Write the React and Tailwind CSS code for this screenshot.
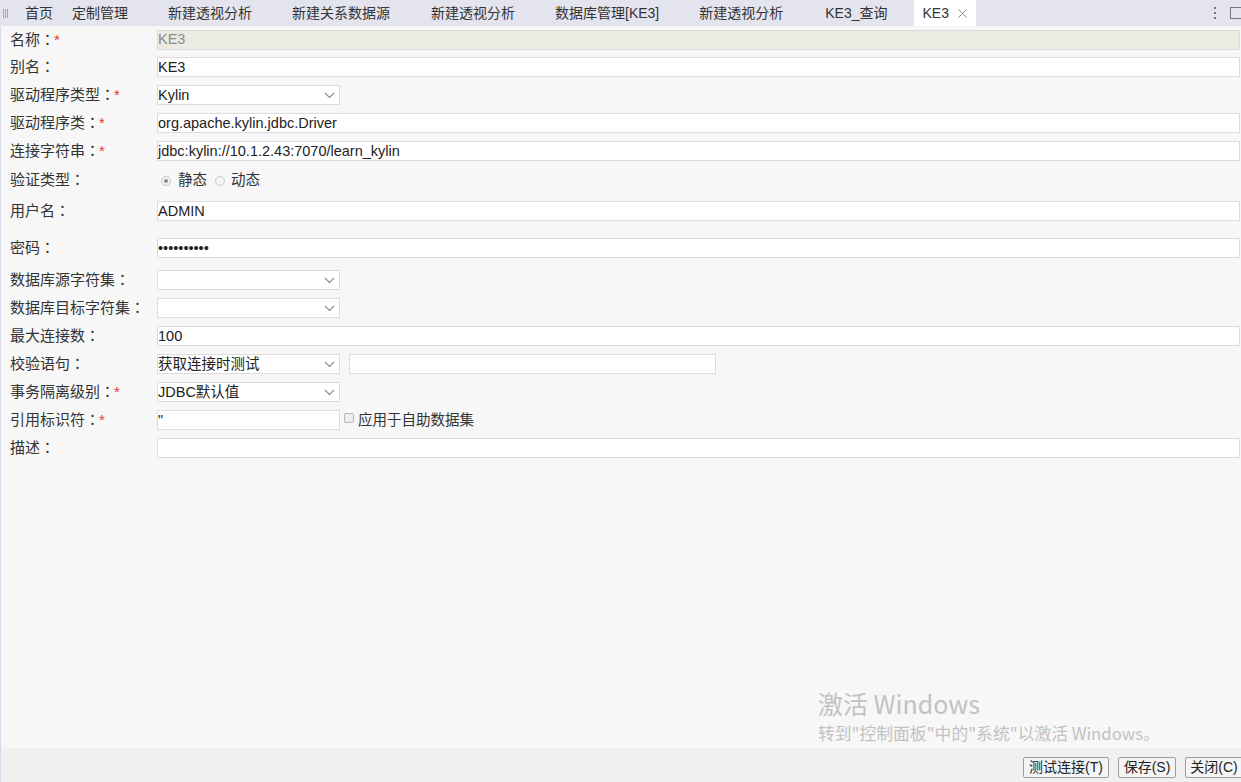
import { X } from "lucide-react";

const tabs = [
  { label: "首页", cls: "ml-[17px]" },
  { label: "定制管理", cls: "ml-[19px]" },
  { label: "新建透视分析", cls: "ml-[40px]" },
  { label: "新建关系数据源", cls: "ml-[40px]" },
  { label: "新建透视分析", cls: "ml-[41px]" },
  { label: "数据库管理[KE3]", cls: "ml-[40px]" },
  { label: "新建透视分析", cls: "ml-[40px]" },
  { label: "KE3_查询", cls: "ml-[42px]" },
];

const font = { fontFamily: '"Liberation Sans", Arial, "Noto Sans CJK SC", sans-serif' };
const colonFont = { fontFamily: '"Noto Sans CJK TC", sans-serif' };

function Chevron() {
  return (
    <svg width="11" height="7" viewBox="0 0 11 7" className="shrink-0">
      <path d="M1 1 L5.5 5.5 L10 1" fill="none" stroke="#8a8a8a" strokeWidth="1.1" />
    </svg>
  );
}

function Label({ text, required }) {
  return (
    <div className="w-[156px] shrink-0 pl-[9px] text-[15px] text-[#333] whitespace-nowrap">
      {text}
      <span style={colonFont}>：</span>
      {required && <span className="text-[#e53935] -ml-[1px]">*</span>}
    </div>
  );
}

function TextBox({ value, disabled, className = "flex-1 mr-[1px]" }) {
  return (
    <div
      className={`${className} h-[20px] border border-[#dcdcdc] flex items-center pt-[1px] text-[14.5px] whitespace-nowrap ${
        disabled ? "bg-[#ebebe4] text-[#8c8c8c]" : "bg-white text-[#222]"
      }`}>
      {value}
    </div>
  );
}

function SelectBox({ value }) {
  return (
    <div className="w-[183px] h-[20px] border border-[#dcdcdc] bg-white flex items-center justify-between pt-[1px] pr-[4px] text-[14.5px] text-[#222]">
      <span>{value}</span>
      <Chevron />
    </div>
  );
}

function Row({ h, children, className = "" }) {
  return <div className={`flex items-center ${h} ${className}`}>{children}</div>;
}

export default function App() {
  return (
    <div className="w-[1241px] h-[782px] flex flex-col overflow-hidden bg-[#f7f7f7] relative" style={font}>
      {/* tab bar */}
      <div className="h-[26px] shrink-0 bg-[#e4e4ee] flex items-stretch text-[14px] text-[#333]">
        <div className="flex items-center gap-[1px] pl-[3px]">
          <span className="w-[1px] h-[9px] bg-[#a6a6b0]" />
          <span className="w-[1px] h-[9px] bg-[#a6a6b0]" />
          <span className="w-[1px] h-[9px] bg-[#a6a6b0]" />
        </div>
        {tabs.map((t, i) => (
          <div key={i} className={`flex items-center whitespace-nowrap ${t.cls}`}>
            {t.label}
          </div>
        ))}
        <div className="ml-[26px] w-[62px] bg-white flex items-center pl-[9px] whitespace-nowrap">
          KE3
          <X size={15} strokeWidth={1.4} className="ml-[6px] text-[#777]" />
        </div>
        <div className="flex-1" />
        <div className="flex items-center">
          <div className="flex flex-col gap-[3px] mr-[14px]">
            <span className="w-[2px] h-[2px] bg-[#777]" />
            <span className="w-[2px] h-[2px] bg-[#777]" />
            <span className="w-[2px] h-[2px] bg-[#777]" />
          </div>
          <div className="w-[12px] h-[12px] border border-[#777] -mr-[1px]" />
        </div>
      </div>

      {/* form */}
      <div className="flex-1 border-l border-[#d8d8ea] flex flex-col">
        <Row h="h-[27px]">
          <Label text="名称" required />
          <TextBox value="KE3" disabled />
        </Row>
        <Row h="h-[28px]">
          <Label text="别名" />
          <TextBox value="KE3" />
        </Row>
        <Row h="h-[28px]">
          <Label text="驱动程序类型" required />
          <SelectBox value="Kylin" />
        </Row>
        <Row h="h-[28px]">
          <Label text="驱动程序类" required />
          <TextBox value="org.apache.kylin.jdbc.Driver" />
        </Row>
        <Row h="h-[28px]">
          <Label text="连接字符串" required />
          <TextBox value="jdbc:kylin://10.1.2.43:7070/learn_kylin" />
        </Row>
        <Row h="h-[30px]">
          <Label text="验证类型" />
          <div className="flex items-center text-[14.5px] text-[#333] pl-[4px] pt-[1px]">
            <span className="w-[10px] h-[10px] rounded-full border border-[#c8c8c8] bg-[#f4f4f4] flex items-center justify-center">
              <span className="w-[4px] h-[4px] rounded-full bg-[#8a8a8a]" />
            </span>
            <span className="ml-[7px]">静态</span>
            <span className="ml-[8px] w-[10px] h-[10px] rounded-full border border-[#c8c8c8] bg-[#f4f4f4]" />
            <span className="ml-[6px]">动态</span>
          </div>
        </Row>
        <Row h="h-[32px]">
          <Label text="用户名" />
          <TextBox value="ADMIN" />
        </Row>
        <Row h="h-[39px]" className="pt-[3px]">
          <Label text="密码" />
          <TextBox value="••••••••••" />
        </Row>
        <Row h="h-[28px]">
          <Label text="数据库源字符集" />
          <SelectBox value="" />
        </Row>
        <Row h="h-[28px]">
          <Label text="数据库目标字符集" />
          <SelectBox value="" />
        </Row>
        <Row h="h-[28px]">
          <Label text="最大连接数" />
          <TextBox value="100" />
        </Row>
        <Row h="h-[28px]">
          <Label text="校验语句" />
          <SelectBox value="获取连接时测试" />
          <TextBox value="" className="ml-[9px] w-[367px]" />
        </Row>
        <Row h="h-[28px]">
          <Label text="事务隔离级别" required />
          <SelectBox value="JDBC默认值" />
        </Row>
        <Row h="h-[28px]">
          <Label text="引用标识符" required />
          <TextBox value={'"'} className="w-[183px]" />
          <span className="ml-[4px] -mt-[4px] w-[10px] h-[10px] border border-[#b8b8b8] bg-[#eeeeee] rounded-[2px]" />
          <span className="ml-[4px] pt-[1px] text-[14.5px] text-[#333]">应用于自助数据集</span>
        </Row>
        <Row h="h-[28px]">
          <Label text="描述" />
          <TextBox value="" />
        </Row>
      </div>

      {/* activation watermark */}
      <div
        className="absolute left-[818px] top-[687px] text-[#c2c2c2] pointer-events-none whitespace-nowrap"
        style={{ fontFamily: '"Noto Sans CJK SC", "Liberation Sans", sans-serif' }}>
        <div className="text-[25px] leading-[32px]">激活 Windows</div>
        <div className="text-[16.8px] leading-[22px] mt-[3px]">
          转到"控制面板"中的"系统"以激活 Windows。
        </div>
      </div>

      {/* bottom bar */}
      <div className="h-[34px] shrink-0 bg-[#f0f0f0] border-l border-[#d8d8ea] flex items-start justify-end gap-[9px] -mr-[2px] pt-[9px]">
        <button className="h-[21px] w-[86px] border border-[#9e9e9e] rounded-[2px] bg-[#f4f4f4] text-[14px] text-[#222] flex items-center justify-center">
          测试连接(T)
        </button>
        <button className="h-[21px] w-[58px] border border-[#9e9e9e] rounded-[2px] bg-[#f4f4f4] text-[14px] text-[#222] flex items-center justify-center">
          保存(S)
        </button>
        <button className="h-[21px] w-[58px] border border-[#9e9e9e] rounded-[2px] bg-[#f4f4f4] text-[14px] text-[#222] flex items-center justify-center">
          关闭(C)
        </button>
      </div>
    </div>
  );
}
